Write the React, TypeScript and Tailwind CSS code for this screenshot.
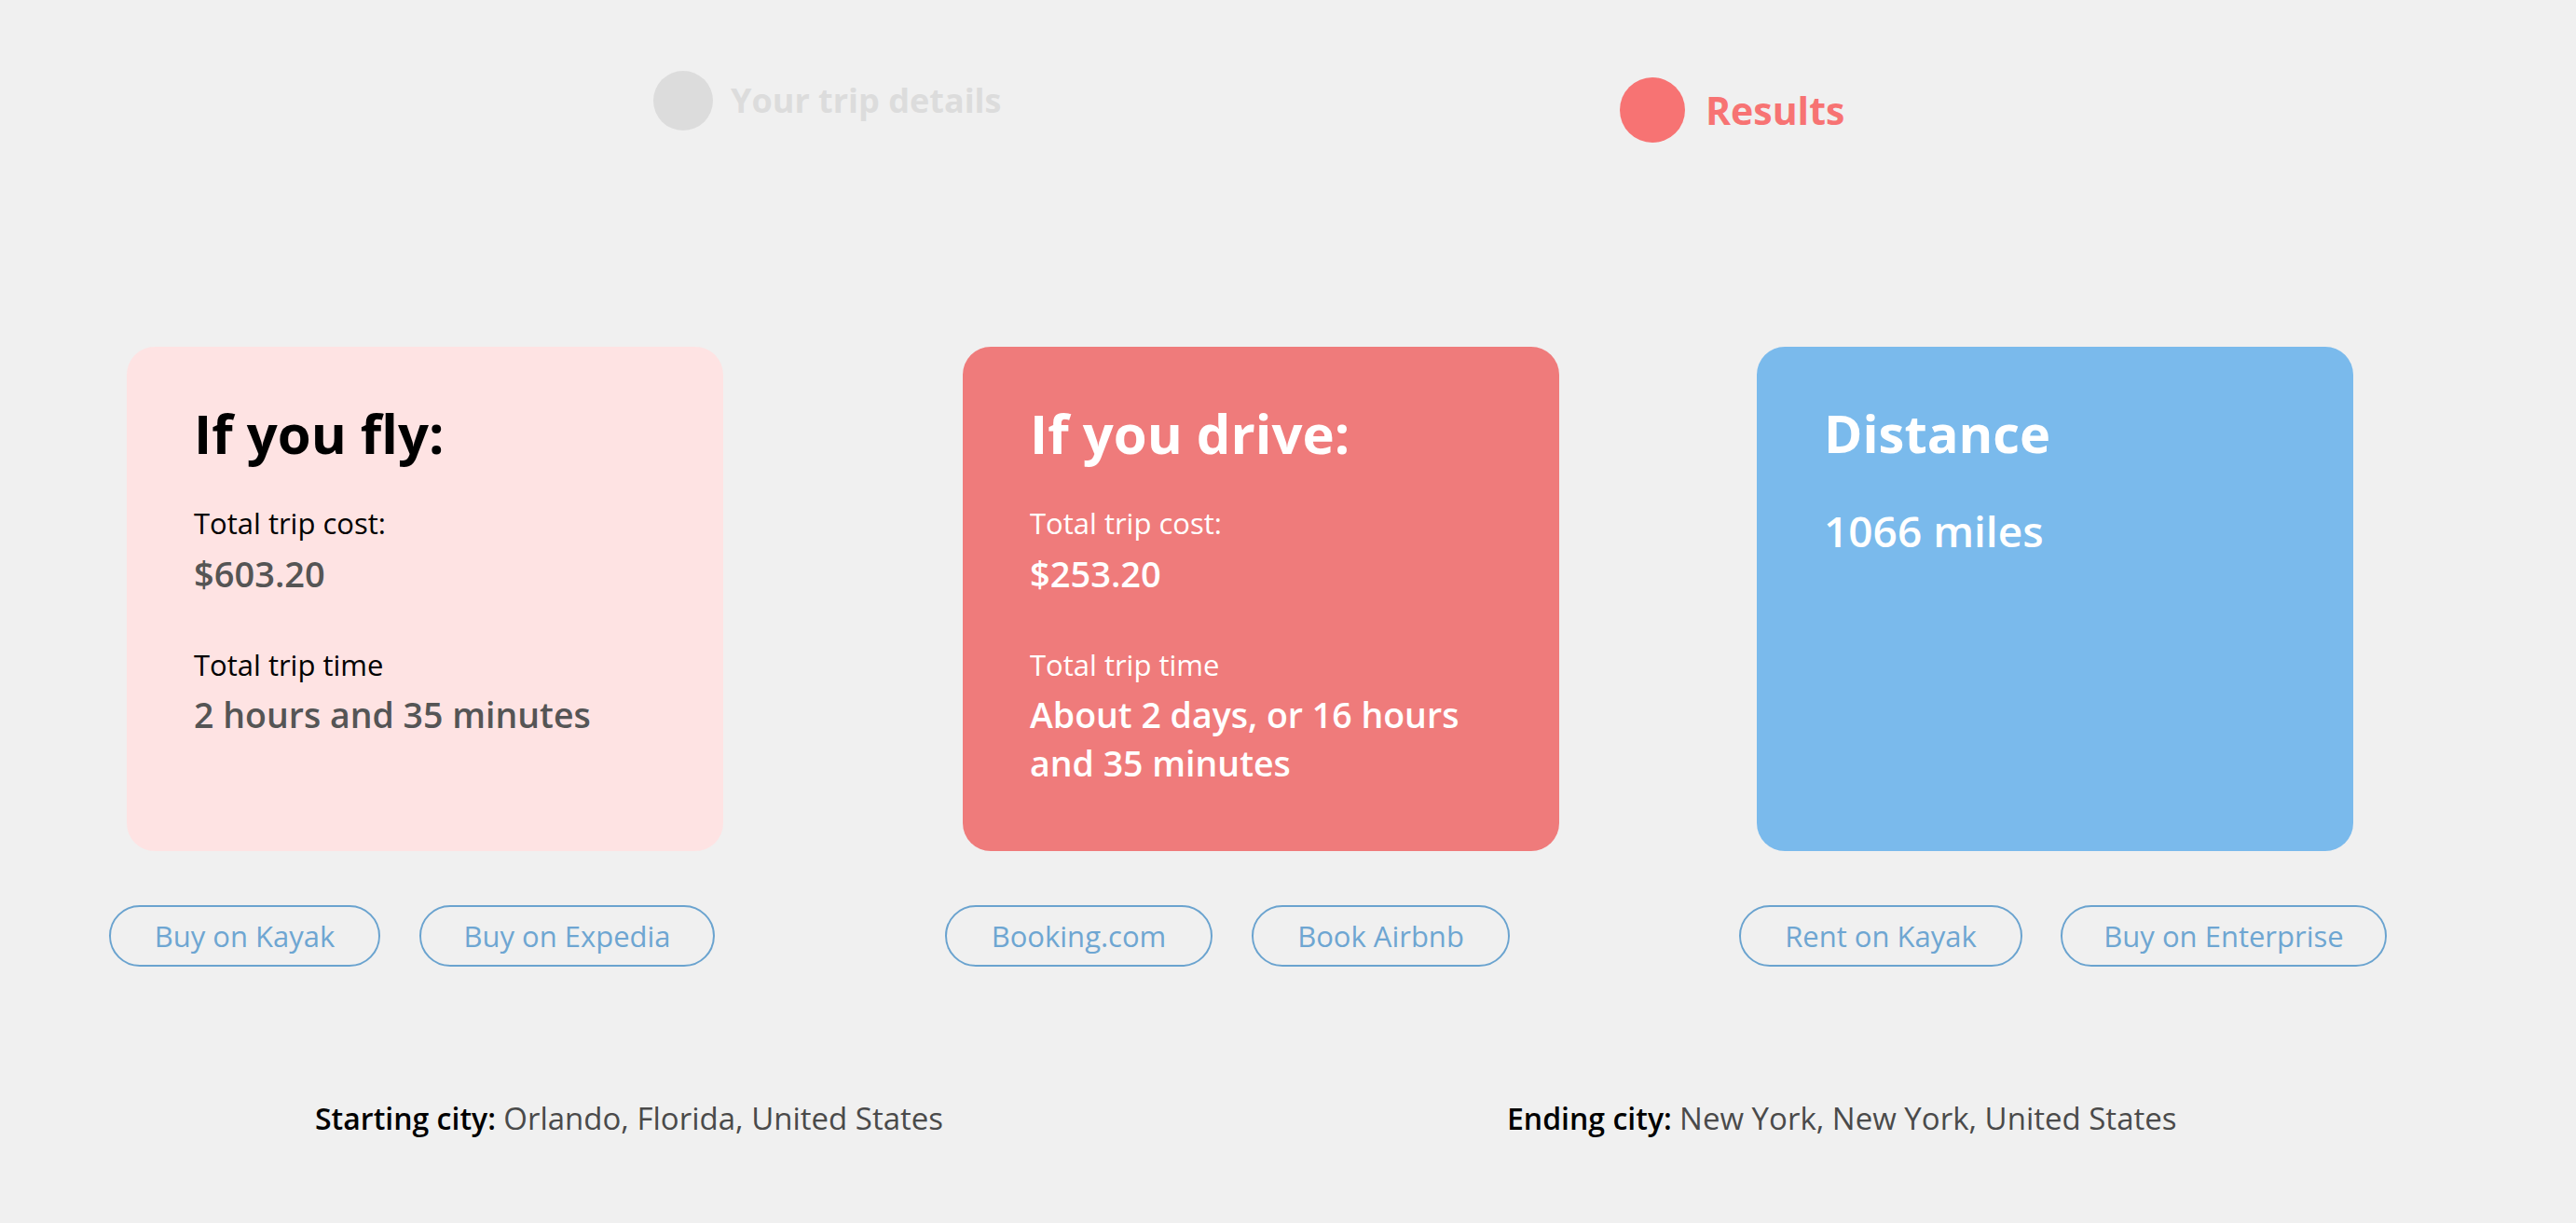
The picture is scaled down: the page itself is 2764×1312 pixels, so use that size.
import React from "react";

const font = { fontFamily: '"Open Sans", "Noto Sans", sans-serif' };

function LinkButton({ label, width }: { label: string; width: string }) {
  return (
    <a
      href="#"
      className={`flex h-[66px] items-center justify-center rounded-full border-2 border-[#6aa3cf] text-[31px] leading-none text-[#6ea6d2] ${width}`}
    >
      {label}
    </a>
  );
}

export default function App() {
  return (
    <div className="min-h-screen w-full bg-[#f0f0f0]" style={font}>
      {/* progress steps */}
      <div className="flex items-start pl-[701px] pt-[76px]">
        <div className="flex w-[1037px] items-center gap-[19px]">
          <div className="h-[64px] w-[64px] rounded-full bg-[#dcdcdc]" />
          <span className="text-[36px] font-bold leading-none text-[#dcdcdc]">Your trip details</span>
        </div>
        <div className="mt-[7px] flex items-center gap-[22px]">
          <div className="h-[70px] w-[70px] rounded-full bg-[#f77373]" />
          <span className="text-[41px] font-bold leading-none text-[#f77373]">Results</span>
        </div>
      </div>

      {/* result cards */}
      <div className="mt-[219px] grid grid-cols-[897px_852px_auto] pl-[117px]">
        <div className="flex flex-col">
          <div className="ml-[19px] h-[541px] w-[640px] rounded-[30px] bg-[#fee3e3] px-[72px] pt-[64px]">
            <h2 className="text-[58px] font-bold leading-none text-black">If you fly:</h2>
            <p className="mt-[47px] text-[31px] leading-[40px] text-black">Total trip cost:</p>
            <p className="mt-[8px] text-[38px] font-semibold leading-[52px] text-[#555555]">$603.20</p>
            <p className="mt-[52px] text-[31px] leading-[40px] text-black">Total trip time</p>
            <p className="mt-[8px] text-[37.5px] font-semibold leading-[52px] text-[#555555]">2 hours and 35 minutes</p>
          </div>
          <div className="mt-[58px] flex gap-[42px]">
            <LinkButton label="Buy on Kayak" width="w-[291px]" />
            <LinkButton label="Buy on Expedia" width="w-[317px]" />
          </div>
        </div>

        <div className="flex flex-col">
          <div className="ml-[19px] h-[541px] w-[640px] rounded-[30px] bg-[#ef7b7b] px-[72px] pt-[64px] text-white">
            <h2 className="text-[58px] font-bold leading-none">If you drive:</h2>
            <p className="mt-[47px] text-[31px] leading-[40px]">Total trip cost:</p>
            <p className="mt-[8px] text-[38px] font-semibold leading-[52px]">$253.20</p>
            <p className="mt-[52px] text-[31px] leading-[40px]">Total trip time</p>
            <p className="mt-[8px] text-[37.5px] font-semibold leading-[52px]">About 2 days, or 16 hours and 35 minutes</p>
          </div>
          <div className="mt-[58px] flex gap-[42px]">
            <LinkButton label="Booking.com" width="w-[287px]" />
            <LinkButton label="Book Airbnb" width="w-[277px]" />
          </div>
        </div>

        <div className="flex flex-col">
          <div className="ml-[19px] h-[541px] w-[640px] rounded-[30px] bg-[#7abaec] px-[72px] pt-[64px] text-white">
            <h2 className="text-[56px] font-bold leading-none">Distance</h2>
            <p className="mt-[47px] text-[46px] font-semibold leading-[60px]">1066 miles</p>
          </div>
          <div className="mt-[58px] flex gap-[41px]">
            <LinkButton label="Rent on Kayak" width="w-[304px]" />
            <LinkButton label="Buy on Enterprise" width="w-[350px]" />
          </div>
        </div>
      </div>

      {/* route summary */}
      <div className="mt-[143px] flex pl-[338px] text-[32px] leading-[40px]">
        <p className="w-[1279px]">
          <span className="font-semibold text-black">Starting city: </span>
          <span className="text-[33px] text-[#4a4a4a]">Orlando, Florida, United States</span>
        </p>
        <p>
          <span className="font-semibold text-black">Ending city: </span>
          <span className="text-[33px] text-[#4a4a4a]">New York, New York, United States</span>
        </p>
      </div>
    </div>
  );
}
